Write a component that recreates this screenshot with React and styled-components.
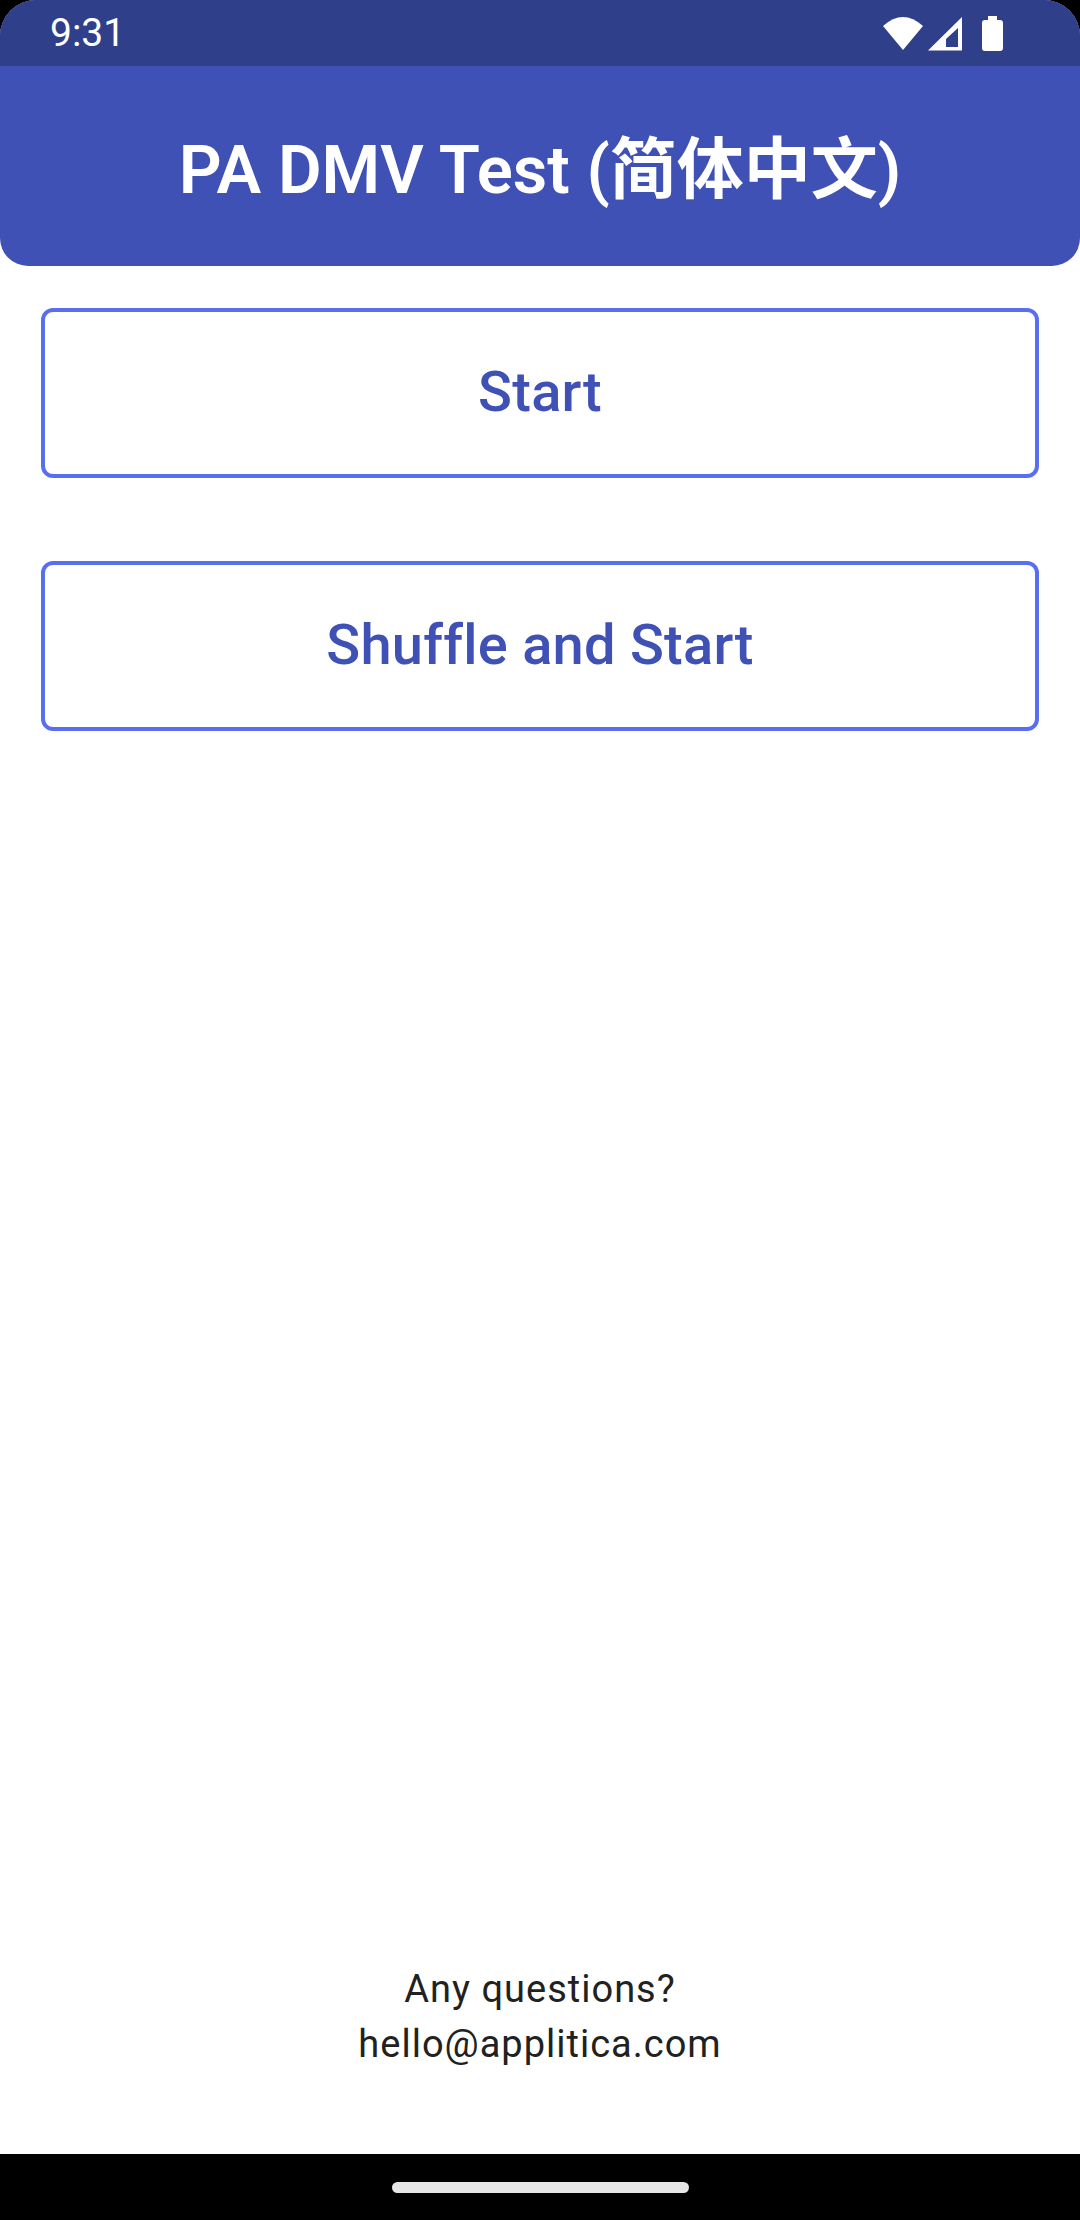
import React from "react";
import styled, { createGlobalStyle } from "styled-components";

const Global = createGlobalStyle`
  html, body { margin: 0; padding: 0; background: #000; }
  * { box-sizing: border-box; }
`;

const Screen = styled.div`
  width: 1080px;
  height: 2220px;
  display: flex;
  flex-direction: column;
  background: #000;
  font-family: Roboto, "Noto Sans CJK SC", sans-serif;
  overflow: hidden;
`;

const Body = styled.div`
  flex: 1;
  display: flex;
  flex-direction: column;
  background: #fff;
  border-radius: 36px 36px 0 0;
  overflow: hidden;
`;

const Header = styled.header`
  background: #3f51b5;
  border-radius: 0 0 28px 28px;
  display: flex;
  flex-direction: column;
`;

const StatusBar = styled.div`
  height: 66px;
  background: #303f8a;
  display: flex;
  align-items: center;
  justify-content: space-between;
  padding: 0 77px 0 50px;
  color: #fff;
`;

const Clock = styled.span`
  font-size: 39px;
  font-weight: 400;
  line-height: 66px;
`;

const Title = styled.h1`
  margin: 0;
  height: 200px;
  display: flex;
  align-items: center;
  justify-content: center;
  color: #fff;
  font-size: 67px;
  font-weight: 600;
  padding-bottom: 5px;
`;

const Actions = styled.div`
  display: flex;
  flex-direction: column;
  gap: 83px;
  padding: 42px 41px 0;
`;

const OutlineButton = styled.button`
  height: 170px;
  border: 4px solid #5a6ff0;
  border-radius: 12px;
  background: #fff;
  color: #3f51b5;
  font-family: inherit;
  font-size: 56px;
  font-weight: 500;
  letter-spacing: 0.25px;
  padding: 0 0 2px;
`;

const Footer = styled.footer`
  margin-top: auto;
  padding-bottom: 82px;
  text-align: center;
  color: #212121;
  font-size: 38px;
  line-height: 55px;
  letter-spacing: 1px;
`;

const NavBar = styled.nav`
  height: 66px;
  flex: none;
  background: #000;
  display: flex;
  align-items: center;
  justify-content: center;
`;

const HomePill = styled.div`
  width: 297px;
  height: 11px;
  border-radius: 6px;
  background: #e6e6e6;
`;

const StatusIcons = () => (
  <svg width="120" height="35" viewBox="0 0 120 35" fill="#fff">
    <path d="M0 10 Q20 -8 40 10 L20 34 Z" />
    <path
      fillRule="evenodd"
      d="M45 34.5 L79 1 V34.5 Z M63 23 V31 H75 V12 Z"
    />
    <path d="M105 0 H114 V4 H117 Q120 4 120 7 V32 Q120 35 117 35 H102 Q99 35 99 32 V7 Q99 4 102 4 H105 Z" />
  </svg>
);

export default function App() {
  return (
    <Screen>
      <Global />
      <Body>
        <Header>
          <StatusBar>
            <Clock>9:31</Clock>
            <StatusIcons />
          </StatusBar>
          <Title>PA DMV Test (简体中文)</Title>
        </Header>
        <Actions>
          <OutlineButton>Start</OutlineButton>
          <OutlineButton>Shuffle and Start</OutlineButton>
        </Actions>
        <Footer>
          Any questions?
          <br />
          hello@applitica.com
        </Footer>
      </Body>
      <NavBar>
        <HomePill />
      </NavBar>
    </Screen>
  );
}
